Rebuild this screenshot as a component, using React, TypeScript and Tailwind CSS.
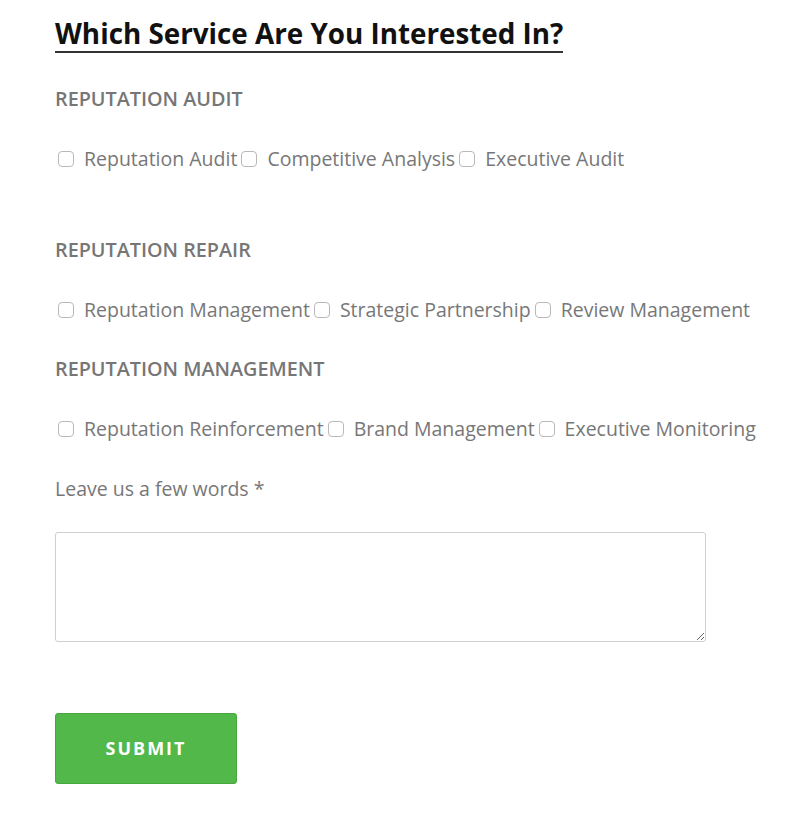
import { useState } from "react";

const sections = [
  {
    title: "REPUTATION AUDIT",
    options: ["Reputation Audit", "Competitive Analysis", "Executive Audit"],
    gapAfter: "mt-[66px]",
  },
  {
    title: "REPUTATION REPAIR",
    options: ["Reputation Management", "Strategic Partnership", "Review Management"],
    gapAfter: "mt-[34px]",
  },
  {
    title: "REPUTATION MANAGEMENT",
    options: ["Reputation Reinforcement", "Brand Management", "Executive Monitoring"],
    gapAfter: "mt-[35px]",
  },
];

function Box({ checked }: { checked: boolean }) {
  return (
    <span
      className={`ml-[3px] mr-[10px] inline-block h-[16px] w-[16px] shrink-0 rounded-[4px] border ${
        checked ? "border-[#52b84a] bg-[#52b84a]" : "border-[#b9b9b9] bg-white"
      }`}
    />
  );
}

export default function App() {
  const [picked, setPicked] = useState<Record<string, boolean>>({});
  const [words, setWords] = useState("");

  function toggle(name: string) {
    setPicked((prev) => ({ ...prev, [name]: !prev[name] }));
  }

  return (
    <div
      className="min-h-[833px] bg-white pl-[55px] pt-[16px] text-[#777]"
      style={{ fontFamily: '"Open Sans", "Noto Sans", sans-serif' }}
    >
      <h2 className="inline-block border-b-2 border-[#333] pb-[1px] text-[27.8px] font-bold leading-[34px] text-[#111]">
        Which Service Are You Interested In?
      </h2>

      {sections.map((section, i) => (
        <div key={section.title} className={i === 0 ? "mt-[34px]" : ""}>
          <div className="text-[19.8px] font-semibold leading-[24px] text-[#767676]">{section.title}</div>
          <div className="mt-[35px] flex items-center text-[19.5px] leading-[26px]">
            {section.options.map((opt) => (
              <label key={opt} className="flex cursor-pointer items-center" onClick={() => toggle(opt)}>
                <Box checked={!!picked[opt]} />
                <span className="mr-[1px] whitespace-nowrap">{opt}</span>
              </label>
            ))}
          </div>
          {i < sections.length - 1 && <div className={section.gapAfter} />}
        </div>
      ))}

      <div className="mt-[35px] text-[19.5px] leading-[24px] text-[#777]">Leave us a few words *</div>
      <textarea
        value={words}
        onChange={(e) => setWords(e.target.value)}
        className="mt-[31px] block h-[110px] w-[651px] rounded-[3px] border border-[#cfcfcf] bg-white px-3 py-2 text-[16px] text-[#555] outline-none"
      />

      <button className="mt-[71px] block h-[71px] w-[182px] rounded-[3px] border border-[#46a83e] bg-[#52b84a] text-[18px] font-bold tracking-[2px] text-white">
        SUBMIT
      </button>
    </div>
  );
}
